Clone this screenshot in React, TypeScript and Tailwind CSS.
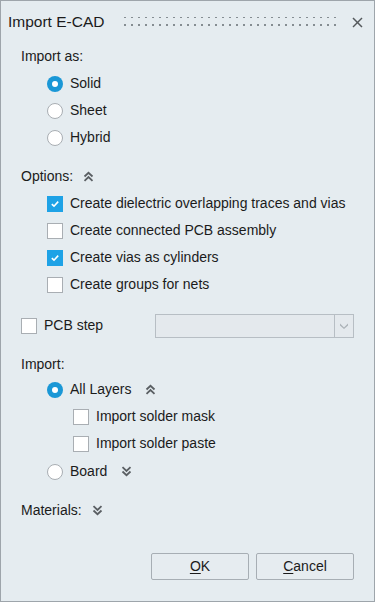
import React from 'react';

const font = { fontFamily: '"Liberation Sans", Arial, sans-serif' };

function Chevrons({ up }: { up: boolean }) {
  return (
    <svg width="11" height="11" viewBox="0 0 11 11" className="text-[#5a5f63]">
      {up ? (
        <g fill="none" stroke="currentColor" strokeWidth="1.8">
          <polyline points="1.5,5.5 5.5,1.8 9.5,5.5" />
          <polyline points="1.5,9.8 5.5,6.1 9.5,9.8" />
        </g>
      ) : (
        <g fill="none" stroke="currentColor" strokeWidth="1.8">
          <polyline points="1.5,1.2 5.5,4.9 9.5,1.2" />
          <polyline points="1.5,5.5 5.5,9.2 9.5,5.5" />
        </g>
      )}
    </svg>
  );
}

function Radio({ checked, label }: { checked: boolean; label: string }) {
  return (
    <div className="flex items-center">
      {checked ? (
        <span className="flex h-[16px] w-[16px] items-center justify-center rounded-full bg-[#1a97d6]">
          <span className="h-[6px] w-[6px] rounded-full bg-white" />
        </span>
      ) : (
        <span className="h-[16px] w-[16px] rounded-full border border-[#a9aeb3] bg-white" />
      )}
      <span className="ml-[7px]">{label}</span>
    </div>
  );
}

function Check({ checked, label }: { checked: boolean; label: string }) {
  return (
    <div className="flex items-center">
      {checked ? (
        <span className="flex h-[16px] w-[16px] items-center justify-center bg-[#1ea2e6]">
          <svg width="10" height="10" viewBox="0 0 10 10">
            <polyline points="1.8,5.2 4,7.2 8.2,2.6" fill="none" stroke="white" strokeWidth="1.6" />
          </svg>
        </span>
      ) : (
        <span className="h-[16px] w-[16px] border border-[#a9aeb3] bg-white" />
      )}
      <span className="ml-[7px]">{label}</span>
    </div>
  );
}

function Button({ first, rest }: { first: string; rest: string }) {
  return (
    <button className="h-[27px] w-[98px] rounded-[2px] border border-[#a7aeb4] bg-[#e6ecf0] text-[14px] text-[#1b1b1b]">
      <span className="underline underline-offset-2">{first}</span>
      {rest}
    </button>
  );
}

export default function App() {
  return (
    <div style={font} className="flex h-[602px] w-[375px] flex-col border border-[#9ea5ab] bg-[#e5ecf0] text-[14px] text-[#1b1b1b]">
      <div className="flex h-[42px] items-center pl-[7px] pr-[11px]">
        <span className="text-[15.5px]">Import E-CAD</span>
        <svg width="214" height="12" className="ml-[20px]">
          <defs>
            <pattern id="grip" x="0" y="0" width="7" height="8" patternUnits="userSpaceOnUse">
              <rect x="0" y="0" width="2" height="2" fill="#858d92" />
            </pattern>
          </defs>
          <rect x="0" y="1" width="212" height="10" fill="url(#grip)" />
        </svg>
        <svg width="11" height="11" viewBox="0 0 11 11" className="ml-auto">
          <g stroke="#55595c" strokeWidth="1.5">
            <line x1="1" y1="1" x2="10" y2="10" />
            <line x1="10" y1="1" x2="1" y2="10" />
          </g>
        </svg>
      </div>

      <div className="flex flex-col pl-[20px] pr-[20px]">
        <div className="flex h-[27px] items-center">Import as:</div>
        <div className="flex flex-col pl-[26px]">
          <div className="flex h-[27px] items-center"><Radio checked label="Solid" /></div>
          <div className="flex h-[27px] items-center"><Radio checked={false} label="Sheet" /></div>
          <div className="flex h-[27px] items-center"><Radio checked={false} label="Hybrid" /></div>
        </div>

        <div className="mt-[12px] flex h-[27px] items-center gap-[10px]">
          <span>Options:</span>
          <Chevrons up />
        </div>
        <div className="flex flex-col pl-[26px]">
          <div className="flex h-[27px] items-center"><Check checked label="Create dielectric overlapping traces and vias" /></div>
          <div className="flex h-[27px] items-center"><Check checked={false} label="Create connected PCB assembly" /></div>
          <div className="flex h-[27px] items-center"><Check checked label="Create vias as cylinders" /></div>
          <div className="flex h-[27px] items-center"><Check checked={false} label="Create groups for nets" /></div>
        </div>

        <div className="mt-[14px] flex h-[27px] items-center">
          <div className="w-[134px]"><Check checked={false} label="PCB step" /></div>
          <div className="flex h-[24px] flex-1 border border-[#b7bec4] bg-[#e4e9ed]">
            <div className="flex-1" />
            <div className="flex w-[19px] items-center justify-center border-l border-[#b7bec4]">
              <svg width="8" height="6" viewBox="0 0 8 6">
                <polygon points="0,0.5 4,4.5 8,0.5 8,2.5 4,6 0,2.5" fill="#aab1b6" />
              </svg>
            </div>
          </div>
        </div>

        <div className="mt-[13px] flex h-[25px] items-center">Import:</div>
        <div className="flex flex-col pl-[26px]">
          <div className="flex h-[25px] items-center gap-[14px]">
            <Radio checked label="All Layers" />
            <Chevrons up />
          </div>
          <div className="mt-[1px] flex flex-col pl-[26px]">
            <div className="flex h-[27px] items-center"><Check checked={false} label="Import solder mask" /></div>
            <div className="flex h-[27px] items-center"><Check checked={false} label="Import solder paste" /></div>
          </div>
          <div className="mt-[1px] flex h-[27px] items-center gap-[14px]">
            <Radio checked={false} label="Board" />
            <Chevrons up={false} />
          </div>
        </div>

        <div className="mt-[12px] flex h-[27px] items-center gap-[10px]">
          <span>Materials:</span>
          <Chevrons up={false} />
        </div>
      </div>

      <div className="mt-auto flex justify-end gap-[7px] pb-[21px] pr-[20px]">
        <Button first="O" rest="K" />
        <Button first="C" rest="ancel" />
      </div>
    </div>
  );
}
